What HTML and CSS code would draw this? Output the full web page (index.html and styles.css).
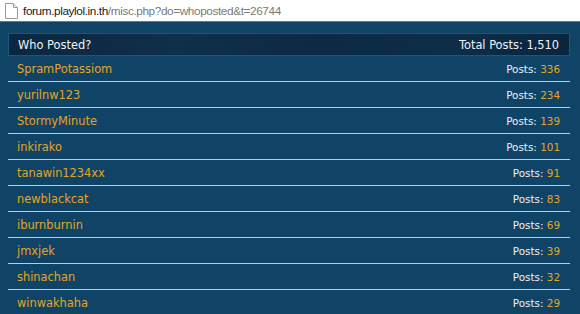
FILE: index.html
```html
<!DOCTYPE html>
<html>
<head>
<meta charset="utf-8">
<link rel="stylesheet" href="styles.css">
</head>
<body>
<div class="urlbar">
  <svg class="pageicon" width="13" height="16" viewBox="0 0 13 16">
    <path d="M0.5 0.5 H8.5 L12.5 4.5 V15.5 H0.5 Z" fill="#fff" stroke="#9a9a9a"/>
    <path d="M8.5 0.5 V4.5 H12.5" fill="#eee" stroke="#9a9a9a"/>
  </svg>
  <span class="host">forum.playlol.in.th</span><span class="path">/misc.php?do=whoposted&amp;t=26744</span>
</div>
<div class="page">
  <div class="head">
    <span>Who Posted?</span>
    <span>Total Posts: 1,510</span>
  </div>
  <ul class="list">
    <li><span class="name">SpramPotassiom</span><span class="posts">Posts: <b>336</b></span></li>
    <li><span class="name">yurilnw123</span><span class="posts">Posts: <b>234</b></span></li>
    <li><span class="name">StormyMinute</span><span class="posts">Posts: <b>139</b></span></li>
    <li><span class="name">inkirako</span><span class="posts">Posts: <b>101</b></span></li>
    <li><span class="name">tanawin1234xx</span><span class="posts">Posts: <b>91</b></span></li>
    <li><span class="name">newblackcat</span><span class="posts">Posts: <b>83</b></span></li>
    <li><span class="name">iburnburnin</span><span class="posts">Posts: <b>69</b></span></li>
    <li><span class="name">jmxjek</span><span class="posts">Posts: <b>39</b></span></li>
    <li><span class="name">shinachan</span><span class="posts">Posts: <b>32</b></span></li>
    <li><span class="name">winwakhaha</span><span class="posts">Posts: <b>29</b></span></li>
  </ul>
</div>
</body>
</html>
```
FILE: styles.css
```css
html, body {
  margin: 0;
  padding: 0;
  height: 100%;
  overflow: hidden;
}
body {
  background: #0f4467;
  font-family: "DejaVu Sans", Verdana, sans-serif;
}
.urlbar {
  background: #fff;
  border-bottom: 1px solid #6c7580;
  display: flex;
  align-items: center;
  padding-left: 5px;
  font-family: "Liberation Sans", Arial, sans-serif;
  font-size: 11.8px;
  letter-spacing: -0.4px;
  box-sizing: border-box;
  height: 22px;
}
.pageicon {
  margin-right: 5px;
  flex: none;
}
.host { color: #1a1a1a; }
.path { color: #7a7a7a; }
.page {
  padding: 11px 10px 0 8px;
}
.head {
  height: 23px;
  box-sizing: border-box;
  border: 1px solid #1f557a;
  background: linear-gradient(90deg, #0b2740 0%, #102f4b 30%, #0c2a45 55%, #0e2d48 80%, #0a2540 100%);
  color: #f2f2f2;
  font-size: 11.4px;
  display: flex;
  justify-content: space-between;
  align-items: center;
  padding: 0 10px 0 9px;
}
.list {
  list-style: none;
  margin: 0;
  padding: 0;
}
.list li {
  height: 25px;
  border-bottom: 1px solid #a9d2f0;
  display: flex;
  justify-content: space-between;
  align-items: center;
  padding: 0 10px 0 9px;
  font-size: 11.4px;
}
.name { color: #e5a424; }
.posts { color: #f0f0f0; font-size: 10.4px; }
.posts b { font-weight: normal; color: #e5a424; }
```
